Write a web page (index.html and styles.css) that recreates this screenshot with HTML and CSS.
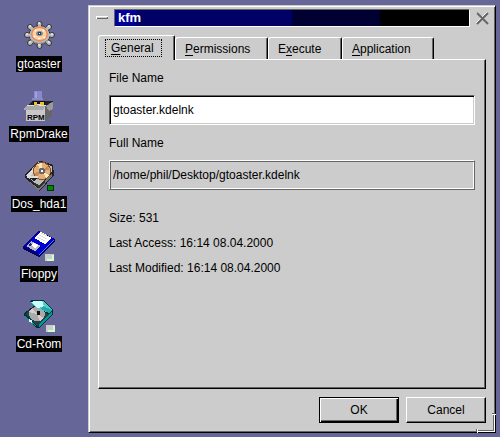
FILE: index.html
```html
<!DOCTYPE html>
<html lang="en">
<head>
  <meta charset="UTF-8" />
  <meta name="viewport" content="width=device-width, initial-scale=1.0" />
  <title>kfm</title>
  <link rel="stylesheet" href="styles.css">
</head>
<body>
  <!-- desktop icons -->
  <nav class="desktop">
    <a class="icon" href="#gtoaster">
      <svg width="48" height="40" viewBox="0 0 48 40">
        <g fill="#bbb" stroke="#333">
          <circle cx="24.500" cy="8" r="2.500" /><circle cx="24.500" cy="30" r="2.500" />
          <circle cx="12" cy="19" r="2.500" /><circle cx="37" cy="19" r="2.500" />
          <circle cx="15" cy="11" r="2.500" /><circle cx="34" cy="11" r="2.500" />
          <circle cx="15" cy="27" r="2.500" /><circle cx="34" cy="27" r="2.500" />
          <ellipse cx="24.500" cy="19" rx="10.500" ry="9.500" />
        </g>
        <path d="M24.500 8v22M12 19h25M15 11l19 16M34 11L15 27" stroke="#bbb" stroke-width="3" />
        <path d="M23 7h2M11 18h2M36 18h2M14 10h2M33 10h2M14 26h2M33 26h2M23 29h2" stroke="#fff" />
        <path d="M16 24q8 7 17 0" fill="none" stroke="#888" />
        <ellipse cx="24.500" cy="18" rx="8.500" ry="7.500" fill="#e98b55" />
        <ellipse cx="24.500" cy="18" rx="7" ry="6" fill="#ffcfa5" />
        <path d="M20 14l1 1M28 15l1-1M19 20l1 1M29 21l1 1M24 22v1" stroke="#fff" stroke-width="2" />
        <ellipse cx="24.500" cy="17.500" rx="3.500" ry="2.500" fill="#888" />
        <path d="M23 16h3v3h-3z" fill="#246" />
        <path d="M24 17h1v1h-1z" fill="#fff" />
      </svg>
      <span>gtoaster</span>
    </a>
    <a class="icon" href="#rpmdrake">
      <svg width="48" height="40" viewBox="0 0 48 40" shape-rendering="crispEdges">
        <path d="M12 20l6-5h20v7H12z" fill="#222" />
        <path d="M11 21h19v14H11z" fill="#c8c8c8" />
        <path d="M30 20l7-4v14l-7 5z" fill="#666" />
        <path d="M31 20l7-4v7l-4 2z" fill="#999" />
        <path d="M18 15h12v6H18z" fill="#111" />
        <path d="M19 16h3v3h-3zM25 16h4v3h-4z" fill="#f0c020" />
        <path d="M22 18h4v3h-4z" fill="#ddd" />
        <path d="M9 23l3-4h19l-3 5H9z" fill="#aaa" />
        <path d="M12 19h7v1h-7zM24 19h7v1h-7z" fill="#ddd" />
        <path d="M19 5h8v7h1v2H17v-2h2z" fill="#8888cc" />
        <path d="M20 6h2v6h-2z" fill="#a0a0dd" />
        <text class="rpm" x="12" y="34">RPM</text>
      </svg>
      <span>RpmDrake</span>
    </a>
    <a class="icon" href="#dos">
      <svg width="48" height="40" viewBox="0 0 48 40" shape-rendering="crispEdges">
        <path d="M10 19L22 6l4-1 12 4 1 10-14 16-3-1-12-12z" fill="#222" />
        <path d="M11 20L23 6l14 4v5L24 30z" fill="#bbb" />
        <path d="M12 19L23 7h4L14 22z" fill="#ddd" />
        <path d="M11 23l12 9 14-15v3L24 35z" fill="#777" />
        <ellipse cx="27" cy="15" rx="9" ry="9" fill="#865020" />
        <ellipse cx="27" cy="15" rx="8" ry="8" fill="#dfae7a" />
        <path d="M27 15l-5-7 5-1zM27 15l7 4-3 3z" fill="#ffe6bd" />
        <path d="M27 15l6-5 1 4zM27 15l-6 6-2-4z" fill="#c98a55" />
        <ellipse cx="27" cy="15" rx="3" ry="3" fill="#666" />
        <path d="M26 14h2v2h-2z" fill="#fff" />
        <path d="M12 20h9l2 2-4 3z" fill="#222" />
        <path d="M12 20h11v2H12z" fill="#ddd" />
        <path d="M20 27l4 2 6-5v3l-6 5-5-4z" fill="#333" />
        <path d="M32 29h7v6h-7z" fill="#030" />
        <path d="M33 30h5v4h-5z" fill="#080" />
      </svg>
      <span>Dos_hda1</span>
    </a>
    <a class="icon" href="#floppy">
      <svg width="48" height="40" viewBox="0 0 48 40" shape-rendering="crispEdges">
        <path d="M8 20L24 5l16 8v2L24 31 8 23z" fill="#006" />
        <path d="M9 20L24 6l15 7-15 15z" fill="#0000d0" />
        <path d="M19 12l7-6 11 6-7 6z" fill="#fff" />
        <path d="M22 11l8 4M24 9l8 4M26 7l8 4" stroke="#ddd" />
        <path d="M11 20l5-5 10 5-6 5z" fill="#bbb" />
        <path d="M16 19l3-2 4 2-3 3z" fill="#fff" />
        <path d="M13 19l2-2 2 1-2 2z" fill="#228" />
        <path d="M24 29l15-15" stroke="#38f" />
        <path d="M30 28h9v7h-9z" fill="#ccc" />
        <path d="M38 29v5h-6" fill="none" stroke="#cfc" stroke-width="2" />
      </svg>
      <span>Floppy</span>
    </a>
    <a class="icon" href="#cdrom">
      <svg width="48" height="40" viewBox="0 0 48 40" shape-rendering="crispEdges">
        <path d="M9 17l10-7-4-4 1-2h12l10 9v5L24 32h-3L9 20z" fill="#033" />
        <path d="M10 18l9-7 16 8-12 11z" fill="#244" />
        <ellipse cx="22" cy="18" rx="8" ry="7" fill="#aaa" />
        <path d="M22 18l-8-2 3-4zM22 18l7 4-4 3z" fill="#dcc" />
        <path d="M22 15h3v4h-3z" fill="#111" />
        <path d="M16 6l3-1h9l9 9-3 3-14-6z" fill="#5cc" />
        <path d="M16 6l3-1h8l2 5-6 2z" fill="#cff" />
        <path d="M28 10l9 4-3 3-8-4z" fill="#2aa" />
        <path d="M37 16v3L24 31v-3z" fill="#099" />
        <path d="M10 20l11 10" stroke="#099" />
        <path d="M14 24l3 2" stroke="#cff" stroke-width="2" />
        <path d="M31 29h9v7h-9z" fill="#ccc" />
        <path d="M39 30v5h-6" fill="none" stroke="#cfc" stroke-width="2" />
      </svg>
      <span>Cd-Rom</span>
    </a>
  </nav>

  <!-- properties dialog -->
  <main class="window">
    <header class="titlebar">
      <button class="win-btn" type="button" aria-label="Minimize">
        <svg width="12" height="4" viewBox="0 0 12 4" shape-rendering="crispEdges">
          <path d="M0 0h12v1H1v2H0z" fill="#fff" />
          <path d="M12 1v2H1V2h10V1z" fill="#666" />
        </svg>
      </button>
      <h1>kfm</h1>
      <button class="win-btn" type="button" aria-label="Close">
        <svg width="13" height="13" viewBox="0 0 13 13">
          <path d="M0 1l11 11M0 11L11 0" stroke="#fff" />
          <path d="M1 1l11 11M1 12L12 1" stroke="#666" stroke-width="2" />
        </svg>
      </button>
    </header>

    <div class="tabs" role="tablist">
      <button class="tab active" type="button" role="tab" aria-selected="true"><span><u>G</u>eneral</span></button>
      <button class="tab" type="button" role="tab"><span><u>P</u>ermissions</span></button>
      <button class="tab" type="button" role="tab"><span>E<u>x</u>ecute</span></button>
      <button class="tab" type="button" role="tab"><span><u>A</u>pplication</span></button>
    </div>

    <section class="pane" role="tabpanel">
      <label for="fileName">File Name</label>
      <input type="text" id="fileName" value="gtoaster.kdelnk" />
      <label for="fullName">Full Name</label>
      <input type="text" id="fullName" value="/home/phil/Desktop/gtoaster.kdelnk" readonly />
      <div class="info">
        <p>Size: 531</p>
        <p>Last Access: 16:14 08.04.2000</p>
        <p>Last Modified: 16:14 08.04.2000</p>
      </div>
    </section>

    <footer class="btn-container">
      <button class="btn default" type="button">OK</button>
      <button class="btn" type="button">Cancel</button>
    </footer>

    <!-- resize grip -->
    <svg class="grip" width="20" height="20" viewBox="0 0 20 20" shape-rendering="crispEdges">
      <path d="M2 18h17v1H2zM18 2h1v17h-1zM1 16h1v4H1zM16 1h4v1h-4z" fill="#fff" />
      <path d="M0 16h1v3H0zM16 0h3v1h-3zM2 17h16v1H2zM17 2h1v16h-1z" fill="#666" />
    </svg>
  </main>
</body>
</html>
```
FILE: styles.css
```css
* {
  box-sizing: border-box;
}
body {
  display: flex;
  gap: 10px;
  min-height: 100vh;
  margin: 0;
  padding: 5px 4px 4px 0;
  background-color: #666699;
  color: #000;
  font-family: "Liberation Sans", Arial, sans-serif;
  font-size: 12px;
  line-height: 16px;
}
button, input {
  margin: 0;
  font: inherit;
  color: inherit;
}

/* desktop */
.desktop {
  display: flex;
  flex-direction: column;
  gap: 14px;
  width: 78px;
  padding-top: 11px;
}
.icon {
  display: flex;
  flex-direction: column;
  align-items: center;
  color: #fff;
  text-decoration: none;
}
.icon span {
  padding: 0 1px;
  background-color: #000;
}
.rpm {
  font-size: 8px;
  font-weight: bold;
}

/* window */
.window {
  position: relative;
  display: flex;
  flex: 1;
  flex-direction: column;
  padding: 3px 0 9px;
  background-color: #ccc;
  border: 1px solid;
  border-color: #ccc #000 #000 #ccc;
  box-shadow: inset 1px 1px #fff, inset -1px -1px #666;
}
.titlebar {
  display: flex;
  height: 18px;
}
.titlebar h1 {
  flex: 1;
  margin: 0;
  padding-left: 3px;
  border: 1px solid;
  border-color: #666 #fff #fff #666;
  background: linear-gradient(to right, #000099 6%, #000066 6%, #000066 50%, #000033 50%, #000033 75%, #000 75%);
  color: #fff;
  font-size: 13px;
  line-height: 16px;
}
.win-btn {
  display: flex;
  align-items: center;
  justify-content: center;
  width: 25px;
  padding: 0;
  border: none;
  background: none;
}

/* tabs */
.tabs {
  display: grid;
  grid-template-columns: 77px 93px 74px 92px;
  align-items: end;
  margin: 8px 9px 0;
}
.tab {
  height: 22px;
  padding: 0 0 0 9px;
  border: 1px solid;
  border-color: #fff #000 #ccc #fff;
  border-bottom: none;
  border-radius: 3px 2px 0 0;
  background-color: #ccc;
  box-shadow: inset -1px 0 #666;
  text-align: left;
}
.tab.active {
  position: relative;
  z-index: 1;
  height: 25px;
  margin-bottom: -1px;
  padding-left: 6px;
}
.tab.active span {
  display: inline-block;
  padding: 1px 8px 1px 6px;
  outline: 1px dotted #000;
  outline-offset: -1px;
}
u {
  text-underline-offset: 2px;
}

/* general pane */
.pane {
  flex: 1;
  margin: 0 9px;
  padding: 10px;
  border: 1px solid;
  border-color: #fff #000 #000 #fff;
  box-shadow: inset -1px -1px #666;
}
label {
  display: block;
  margin-bottom: 9px;
}
input {
  display: block;
  width: 100%;
  height: 30px;
  margin-bottom: 10px;
  padding: 0 3px;
  border: 1px solid;
  border-color: #666 #fff #fff #666;
  border-radius: 0;
  background-color: #fff;
  box-shadow: inset 1px 1px #000, inset -1px -1px #ccc;
}
input:read-only {
  border-color: #fff #666 #666 #fff;
  background-color: #ccc;
  box-shadow: inset 1px 1px #666, inset -1px -1px #fff;
}
.info {
  display: flex;
  flex-direction: column;
  gap: 9px;
  margin-top: 20px;
}
.info p {
  margin: 0;
}

/* dialog buttons */
.btn-container {
  display: flex;
  justify-content: flex-end;
  gap: 7px;
  margin: 8px 9px 0;
}
.btn {
  width: 80px;
  height: 26px;
  padding: 0;
  border: 1px solid;
  border-color: #fff #000 #000 #fff;
  background-color: #ccc;
  box-shadow: inset -1px -1px #666;
}
.btn.default {
  border-color: #000;
  box-shadow: inset 1px 1px #fff, inset -1px -1px #000, inset -2px -2px #666;
}
.grip {
  position: absolute;
  right: -1px;
  bottom: -1px;
}
```
